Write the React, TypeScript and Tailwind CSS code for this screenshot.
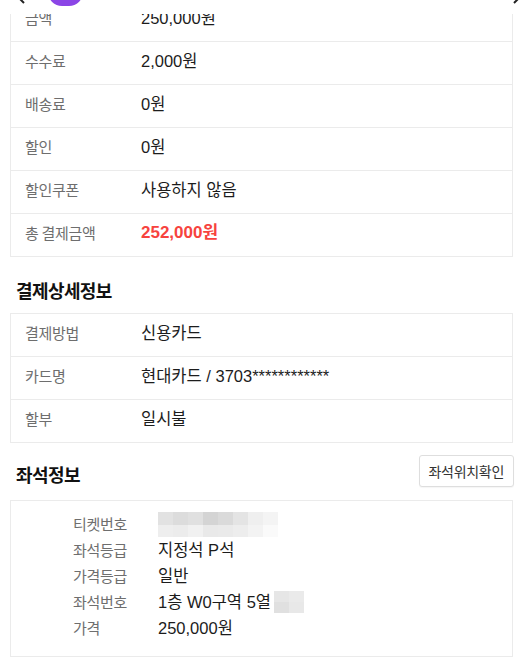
import React from "react";

const font = { fontFamily: '"Noto Sans CJK KR", "Noto Sans", sans-serif' };
const valueFont = { fontFamily: '"Liberation Sans", "Noto Sans CJK KR", sans-serif' };

type Row = { label: string; value: React.ReactNode };

function InfoTable({ rows }: { rows: Row[] }) {
  return (
    <div className="ml-[10px] mr-[14px] border border-[#ebebeb]">
      {rows.map((r, i) => (
        <div
          key={i}
          className={
            "flex items-center h-[38px] pb-[4px] box-content pl-[14px] " +
            (i > 0 ? "border-t border-[#ebebeb]" : "")
          }
        >
          <div className="w-[116px] text-[15px] text-[#6e6e6e] tracking-[-0.3px]">{r.label}</div>
          <div className="text-[16.5px] text-[#1c1c1c]" style={valueFont}>
            {r.value}
          </div>
        </div>
      ))}
    </div>
  );
}

const blurShades1 = ["#e2e2e2", "#dcdcdc", "#e0e0e0", "#d4d4d4", "#dadada", "#e4e4e4", "#efefef", "#f4f4f4"];
const blurShades2 = ["#eeeeee", "#ececec", "#f1f1f1", "#e9e9e9", "#eaeaea", "#ededed", "#f3f3f3", "#fafafa"];

function Blur() {
  return (
    <div className="flex flex-col">
      <div className="flex">
        {blurShades1.map((c, i) => (
          <div key={i} className="w-[15px] h-[13px]" style={{ background: c }} />
        ))}
      </div>
      <div className="flex">
        {blurShades2.map((c, i) => (
          <div key={i} className="w-[15px] h-[12px]" style={{ background: c }} />
        ))}
      </div>
    </div>
  );
}

function SmallBlur() {
  return (
    <div className="inline-flex flex-col align-middle ml-[3px]">
      <div className="flex">
        <div className="w-[15px] h-[11px] bg-[#e6e6e6]" />
        <div className="w-[15px] h-[11px] bg-[#eaeaea]" />
      </div>
      <div className="flex">
        <div className="w-[15px] h-[11px] bg-[#e0e0e0]" />
        <div className="w-[15px] h-[11px] bg-[#e8e8e8]" />
      </div>
    </div>
  );
}

export default function App() {
  const seatRows: Row[] = [
    { label: "티켓번호", value: <Blur /> },
    { label: "좌석등급", value: "지정석 P석" },
    { label: "가격등급", value: "일반" },
    {
      label: "좌석번호",
      value: (
        <span className="inline-flex items-center">
          1층 W0구역 5열
          <SmallBlur />
        </span>
      ),
    },
    { label: "가격", value: "250,000원" },
  ];

  return (
    <div className="relative w-[527px] h-[671px] overflow-hidden bg-white" style={font}>
      {/* top overlay (sticky header remnant) */}
      <div className="absolute top-0 left-0 right-0 h-[14px] bg-white z-10 overflow-hidden">
        <svg className="absolute left-[15px] top-[-10px]" width="14" height="14" viewBox="0 0 14 14">
          <path d="M9 1 L3 7 L9 13" stroke="#222" strokeWidth="2" fill="none" />
        </svg>
        <div className="absolute left-[48px] top-[-26px] w-[35px] h-[32px] rounded-[14px] bg-[#8b45e6]" />
        <svg className="absolute left-[509px] top-[-10px]" width="14" height="14" viewBox="0 0 14 14">
          <path d="M5 1 L11 7 L5 13" stroke="#222" strokeWidth="2" fill="none" />
        </svg>
      </div>

      <div className="mt-[-2px]">
        <InfoTable
          rows={[
            { label: "금액", value: "250,000원" },
            { label: "수수료", value: "2,000원" },
            { label: "배송료", value: "0원" },
            { label: "할인", value: "0원" },
            { label: "할인쿠폰", value: "사용하지 않음" },
            {
              label: "총 결제금액",
              value: <span className="font-bold text-[17px] text-[#f7433e]">252,000원</span>,
            },
          ]}
        />
      </div>

      <div className="mt-[21px] mb-[11px] pl-[16px] h-[24px] flex items-center">
        <h2 className="text-[18px] font-bold text-[#111] tracking-[-0.6px]">결제상세정보</h2>
      </div>

      <InfoTable
        rows={[
          { label: "결제방법", value: "신용카드" },
          { label: "카드명", value: "현대카드 / 3703************" },
          { label: "할부", value: "일시불" },
        ]}
      />

      <div className="mt-[12px] mb-[13px] pl-[16px] mr-[13px] flex items-end justify-between h-[32px]">
        <h2 className="text-[18px] font-bold text-[#111] tracking-[-0.6px] leading-[24px] mb-[1px]">좌석정보</h2>
        <button className="h-[32px] px-[9px] border border-[#dedede] rounded-[3px] text-[14px] text-[#333] bg-white shadow-[0_1px_1px_rgba(0,0,0,0.04)] tracking-[-0.3px]">
          좌석위치확인
        </button>
      </div>

      <div className="ml-[10px] mr-[14px] border border-[#ebebeb] pt-[10px] pb-[15px] pl-[62px] flex flex-col">
        {seatRows.map((r, i) => (
          <div key={i} className="flex items-center h-[26px]">
            <div className="w-[85px] text-[15px] text-[#6e6e6e] tracking-[-0.3px]">{r.label}</div>
            <div className="text-[16.5px] text-[#1c1c1c]" style={valueFont}>
              {r.value}
            </div>
          </div>
        ))}
      </div>
    </div>
  );
}
